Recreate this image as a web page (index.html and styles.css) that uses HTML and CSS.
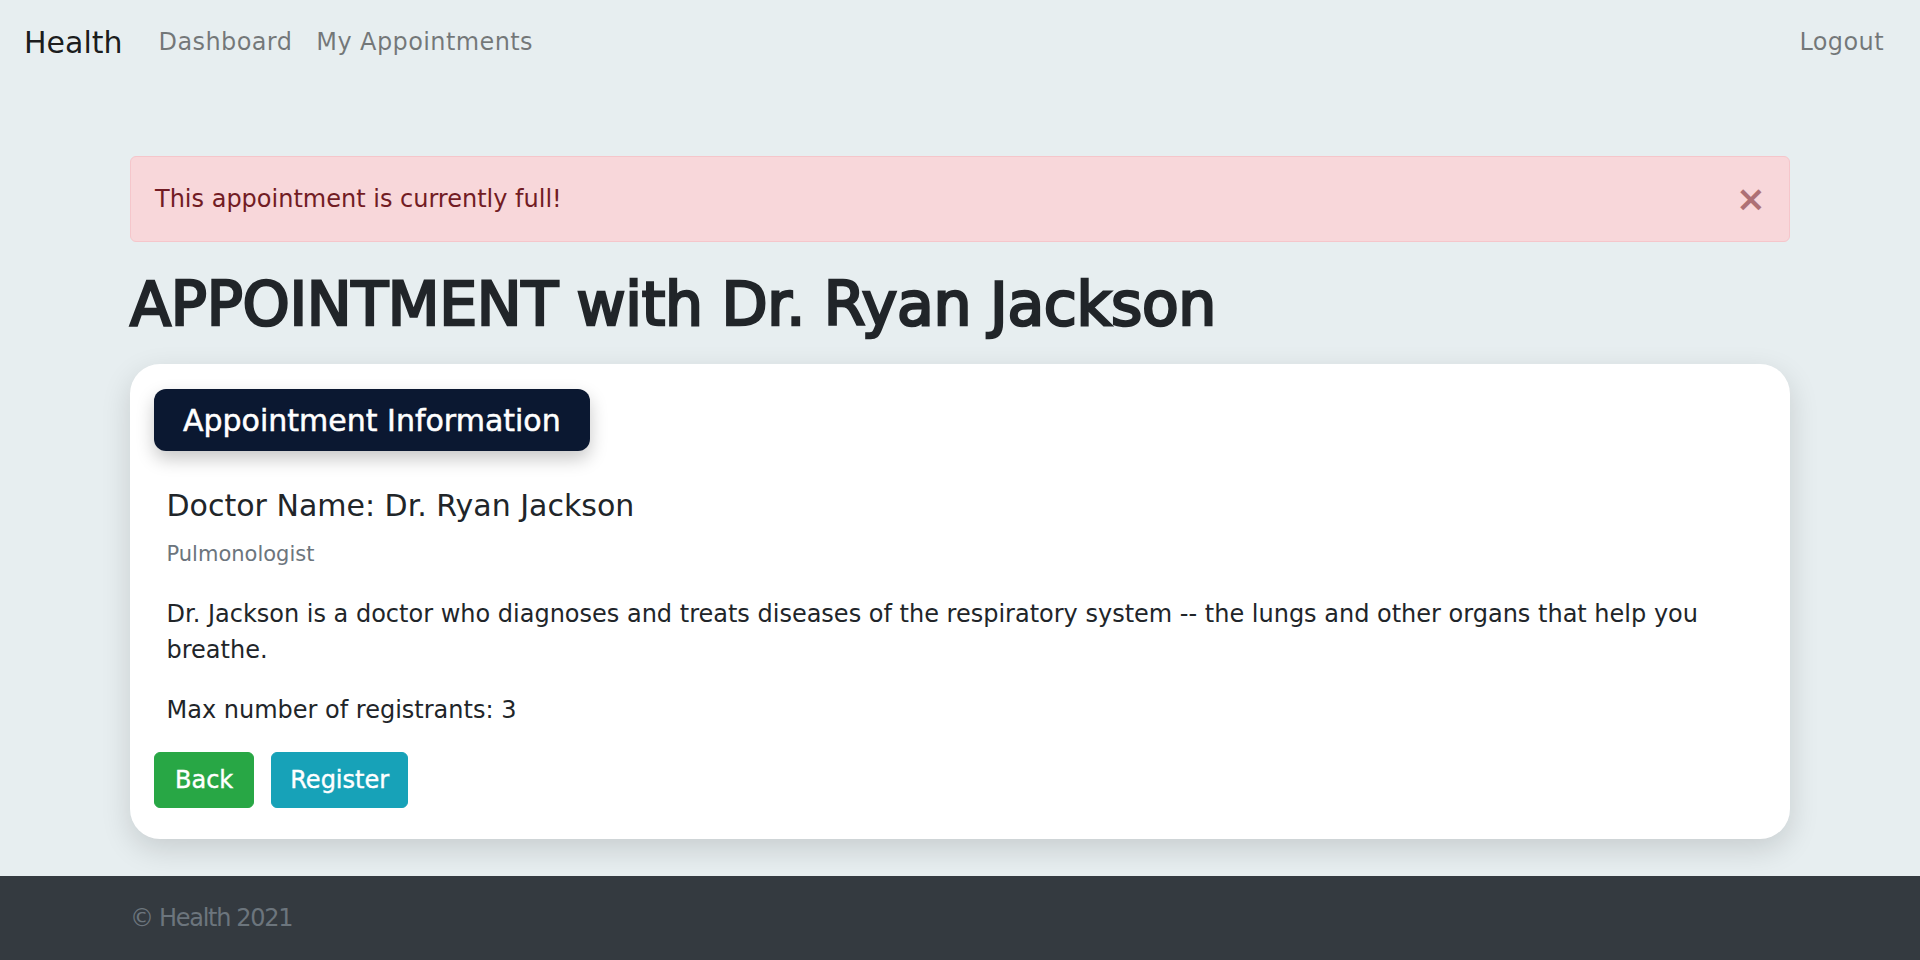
FILE: index.html
```html
<!DOCTYPE html>
<html lang="en">
<head>
<meta charset="utf-8">
<title>Appointment - Health</title>
<link rel="stylesheet" href="styles.css">
</head>
<body>
<nav class="navbar">
  <a class="brand" href="#">Health</a>
  <a class="nav-link" href="#">Dashboard</a>
  <a class="nav-link" href="#">My Appointments</a>
  <a class="nav-link nav-right" href="#">Logout</a>
</nav>
<main class="main">
  <div class="container">
    <div class="alert">
      <span>This appointment is currently full!</span>
      <span class="close">&times;</span>
    </div>
    <h1 class="title">APPOINTMENT with Dr. Ryan Jackson</h1>
    <section class="card">
      <div class="badge">Appointment Information</div>
      <div class="card-body">
        <h5 class="doctor">Doctor Name: Dr. Ryan Jackson</h5>
        <div class="subtitle">Pulmonologist</div>
        <p class="text">Dr. Jackson is a doctor who diagnoses and treats diseases of the respiratory system -- the lungs and other organs that help you breathe.</p>
        <p class="text">Max number of registrants: 3</p>
      </div>
      <div class="actions">
        <a class="btn btn-green" href="#">Back</a>
        <a class="btn btn-teal" href="#">Register</a>
      </div>
    </section>
  </div>
</main>
<footer class="footer">
  <div class="container footer-text">&copy; Health 2021</div>
</footer>
</body>
</html>
```
FILE: styles.css
```css
html, body {
  margin: 0;
  padding: 0;
}
body {
  background: #e7eef0;
  font-family: "DejaVu Sans", "Liberation Sans", sans-serif;
  font-size: 24px;
  line-height: 1.5;
  color: #212529;
  min-height: 100vh;
  display: flex;
  flex-direction: column;
}
a { text-decoration: none; }

.navbar {
  display: flex;
  align-items: center;
  padding: 12px 24px;
}
.brand {
  font-size: 30px;
  line-height: 45px;
  padding: 7.5px 0;
  margin-right: 24px;
  color: rgba(0, 0, 0, 0.9);
}
.nav-link {
  padding: 12px;
  line-height: 36px;
  letter-spacing: 0.4px;
  color: rgba(0, 0, 0, 0.5);
}
.nav-right {
  margin-left: auto;
}

.main {
  flex: 1;
  padding-top: 72px;
}
.container {
  width: 1660px;
  margin: 0 auto;
}

.alert {
  display: flex;
  justify-content: space-between;
  align-items: center;
  background: #f8d7da;
  border: 1px solid #f5c6cb;
  border-radius: 6px;
  color: #721c24;
  padding: 24px 23px 24px 24px;
}
.close {
  font-size: 36px;
  line-height: 36px;
  font-weight: 700;
  color: #721c24;
  opacity: 0.55;
}

.title {
  font-weight: 400;
  font-size: 60px;
  line-height: 72px;
  letter-spacing: -0.3px;
  -webkit-text-stroke: 2.6px #212529;
  margin: 26px 0 24px;
  color: #212529;
}

.card {
  background: #fff;
  border-radius: 30px;
  box-shadow: 0 10px 30px rgba(0, 0, 0, 0.14);
  padding: 25px 24px 31.5px;
  margin-bottom: 35.5px;
}
.badge {
  display: inline-block;
  background: #0b1831;
  color: #fff;
  font-size: 30px;
  line-height: 45px;
  padding: 8.5px 29px;
  border-radius: 12px;
  -webkit-text-stroke: 0.5px #fff;
  box-shadow: 0 8px 18px rgba(0, 0, 0, 0.22);
}
.card-body {
  padding: 0 12.5px;
}
.doctor {
  font-size: 30px;
  font-weight: 400;
  line-height: 36px;
  margin: 37px 0 15px;
}
.subtitle {
  font-size: 21px;
  line-height: 31.5px;
  color: #6c757d;
  margin-bottom: 25px;
}
.text {
  margin: 0 0 24px;
}
.actions {
  display: flex;
  gap: 17px;
}
.btn {
  display: inline-block;
  color: #fff;
  padding: 9px 18px;
  line-height: 36px;
  border: 1.5px solid transparent;
  border-radius: 6px;
  -webkit-text-stroke: 0.4px #fff;
}
.btn-green {
  background: #28a745;
  border-color: #28a745;
  padding: 9px 20px;
}
.btn-teal {
  background: #17a2b8;
  border-color: #17a2b8;
}

.footer {
  background: #343a40;
  padding: 24px 0 24.5px;
}
.footer-text {
  color: #6c757d;
  line-height: 36px;
  letter-spacing: -1.3px;
}
```
